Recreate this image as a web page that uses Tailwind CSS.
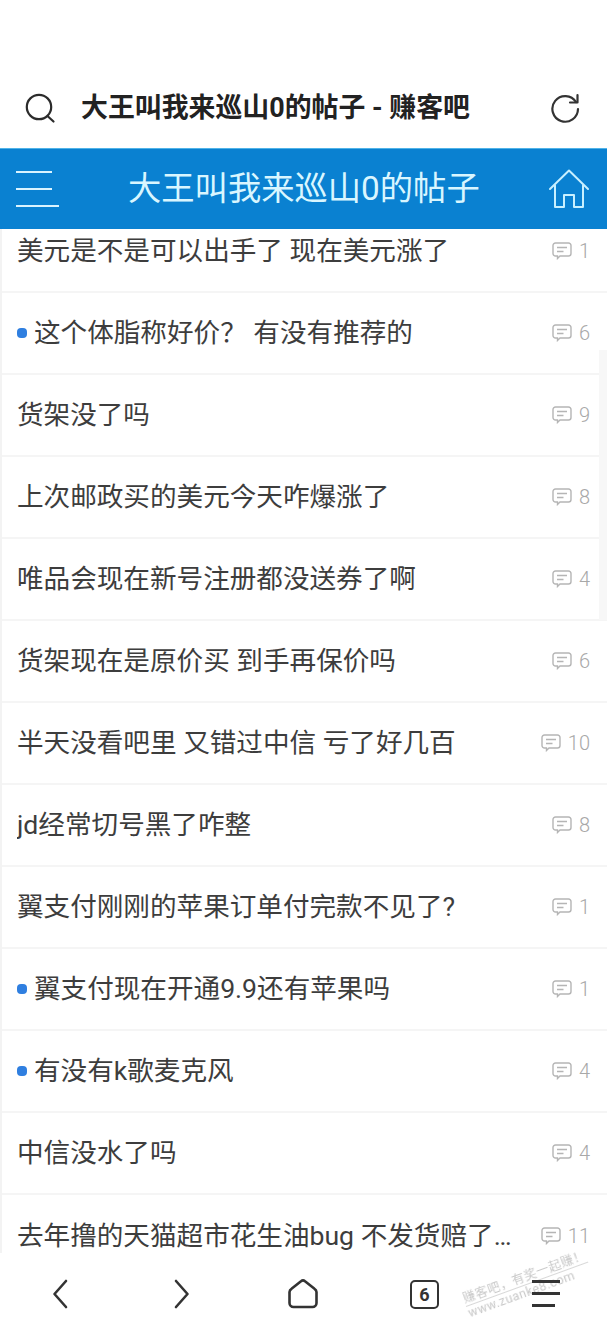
<!doctype html>
<html lang="zh-CN">
<head>
<meta charset="utf-8">
<script src="https://cdn.jsdelivr.net/npm/@tailwindcss/browser@4"></script>
</head>
<body class="bg-white">
<div class="relative w-[607px] h-[1334px] overflow-hidden bg-white flex flex-col font-['Roboto','Noto_Sans_CJK_SC',sans-serif]">
  <div class="h-[148px] shrink-0 pt-[68px] flex items-start">
    <div class="h-[80px] w-full flex items-center">
      <svg class="ml-[24px] w-[32px] h-[32px] shrink-0" viewBox="0 0 32 32" fill="none" stroke="#2b2b2b" stroke-width="2.2" stroke-linecap="round"><circle cx="15" cy="15" r="12.2"/><path d="M24 24.500l5.500 5"/></svg>
      <div class="ml-[25px] text-[26.9px] leading-[36px] font-bold text-[#222] whitespace-nowrap">大王叫我来巡山0的帖子 - 赚客吧</div>
      <svg class="ml-auto mr-[26px] w-[32px] h-[32px] shrink-0" viewBox="0 0 32 32" fill="none" stroke="#333" stroke-width="2.2" stroke-linecap="round" stroke-linejoin="round"><path d="M27 10A12.800 12.800 0 1 0 29 17"/><path d="M28.500 3v7.500H21"/></svg>
    </div>
  </div>
  <header class="h-[81px] shrink-0 bg-[#0a81d1] flex items-center relative z-10 border-t border-[#4fb3e8]">
    <div class="ml-[16px] w-[43px] h-[36px] flex flex-col justify-between">
      <div class="h-[2px] w-[36px] bg-[#d9f3ff]"></div>
      <div class="h-[2px] w-[36px] bg-[#d9f3ff]"></div>
      <div class="h-[2px] w-[43px] bg-[#d9f3ff]"></div>
    </div>
    <div class="ml-[69px] text-[33.3px] leading-[44px] text-[#d9f6ff] whitespace-nowrap">大王叫我来巡山0的帖子</div>
    <svg class="ml-auto mr-[18px] w-[40px] h-[40px] shrink-0" viewBox="0 0 40 40" fill="none" stroke="#c8f0ff" stroke-width="2" stroke-linejoin="round" stroke-linecap="round"><path d="M1 20 20 1.500 39 20"/><path d="M6 16.500V38h9V26h10v12h9V16.500"/></svg>
  </header>
  <main class="h-[1024px] shrink-0 overflow-hidden relative text-[26.6px] text-[#3d3d3d] border-l-2 border-[#f3f3f3]">
    <ul class="-mt-[18px] flex flex-col">
      <li class="h-[82px] border-b-2 border-[#f5f5f5] flex items-center pl-[15px] pr-[17px]"><span class="truncate flex-1 whitespace-nowrap">美元是不是可以出手了 现在美元涨了</span><svg class="w-[20px] h-[18px] shrink-0 ml-[8px]" viewBox="0 0 20 18" fill="none" stroke="#b5b5b5" stroke-width="1.4"><path d="M3.500 1h13a2.500 2.500 0 0 1 2.500 2.500v8a2.500 2.500 0 0 1-2.500 2.500H8l-2.500 2.500V14h-2A2.500 2.500 0 0 1 1 11.500v-8A2.500 2.500 0 0 1 3.500 1z"/><path d="M5 5.500h10M5 9.500h6.500"/></svg><span class="ml-[7px] text-[20px] font-light text-[#a8a8a8]">1</span></li>
      <li class="h-[82px] border-b-2 border-[#f5f5f5] flex items-center pl-[15px] pr-[17px]"><span class="w-[10px] h-[10px] rounded-[4px] bg-[#2f7fe0] shrink-0 mr-[7px]"></span><span class="truncate flex-1 whitespace-nowrap">这个体脂称好价？ 有没有推荐的</span><svg class="w-[20px] h-[18px] shrink-0 ml-[8px]" viewBox="0 0 20 18" fill="none" stroke="#b5b5b5" stroke-width="1.4"><path d="M3.500 1h13a2.500 2.500 0 0 1 2.500 2.500v8a2.500 2.500 0 0 1-2.500 2.500H8l-2.500 2.500V14h-2A2.500 2.500 0 0 1 1 11.500v-8A2.500 2.500 0 0 1 3.500 1z"/><path d="M5 5.500h10M5 9.500h6.500"/></svg><span class="ml-[7px] text-[20px] font-light text-[#a8a8a8]">6</span></li>
      <li class="h-[82px] border-b-2 border-[#f5f5f5] flex items-center pl-[15px] pr-[17px]"><span class="truncate flex-1 whitespace-nowrap">货架没了吗</span><svg class="w-[20px] h-[18px] shrink-0 ml-[8px]" viewBox="0 0 20 18" fill="none" stroke="#b5b5b5" stroke-width="1.4"><path d="M3.500 1h13a2.500 2.500 0 0 1 2.500 2.500v8a2.500 2.500 0 0 1-2.500 2.500H8l-2.500 2.500V14h-2A2.500 2.500 0 0 1 1 11.500v-8A2.500 2.500 0 0 1 3.500 1z"/><path d="M5 5.500h10M5 9.500h6.500"/></svg><span class="ml-[7px] text-[20px] font-light text-[#a8a8a8]">9</span></li>
      <li class="h-[82px] border-b-2 border-[#f5f5f5] flex items-center pl-[15px] pr-[17px]"><span class="truncate flex-1 whitespace-nowrap">上次邮政买的美元今天咋爆涨了</span><svg class="w-[20px] h-[18px] shrink-0 ml-[8px]" viewBox="0 0 20 18" fill="none" stroke="#b5b5b5" stroke-width="1.4"><path d="M3.500 1h13a2.500 2.500 0 0 1 2.500 2.500v8a2.500 2.500 0 0 1-2.500 2.500H8l-2.500 2.500V14h-2A2.500 2.500 0 0 1 1 11.500v-8A2.500 2.500 0 0 1 3.500 1z"/><path d="M5 5.500h10M5 9.500h6.500"/></svg><span class="ml-[7px] text-[20px] font-light text-[#a8a8a8]">8</span></li>
      <li class="h-[82px] border-b-2 border-[#f5f5f5] flex items-center pl-[15px] pr-[17px]"><span class="truncate flex-1 whitespace-nowrap">唯品会现在新号注册都没送券了啊</span><svg class="w-[20px] h-[18px] shrink-0 ml-[8px]" viewBox="0 0 20 18" fill="none" stroke="#b5b5b5" stroke-width="1.4"><path d="M3.500 1h13a2.500 2.500 0 0 1 2.500 2.500v8a2.500 2.500 0 0 1-2.500 2.500H8l-2.500 2.500V14h-2A2.500 2.500 0 0 1 1 11.500v-8A2.500 2.500 0 0 1 3.500 1z"/><path d="M5 5.500h10M5 9.500h6.500"/></svg><span class="ml-[7px] text-[20px] font-light text-[#a8a8a8]">4</span></li>
      <li class="h-[82px] border-b-2 border-[#f5f5f5] flex items-center pl-[15px] pr-[17px]"><span class="truncate flex-1 whitespace-nowrap">货架现在是原价买 到手再保价吗</span><svg class="w-[20px] h-[18px] shrink-0 ml-[8px]" viewBox="0 0 20 18" fill="none" stroke="#b5b5b5" stroke-width="1.4"><path d="M3.500 1h13a2.500 2.500 0 0 1 2.500 2.500v8a2.500 2.500 0 0 1-2.500 2.500H8l-2.500 2.500V14h-2A2.500 2.500 0 0 1 1 11.500v-8A2.500 2.500 0 0 1 3.500 1z"/><path d="M5 5.500h10M5 9.500h6.500"/></svg><span class="ml-[7px] text-[20px] font-light text-[#a8a8a8]">6</span></li>
      <li class="h-[82px] border-b-2 border-[#f5f5f5] flex items-center pl-[15px] pr-[17px]"><span class="truncate flex-1 whitespace-nowrap">半天没看吧里 又错过中信 亏了好几百</span><svg class="w-[20px] h-[18px] shrink-0 ml-[8px]" viewBox="0 0 20 18" fill="none" stroke="#b5b5b5" stroke-width="1.4"><path d="M3.500 1h13a2.500 2.500 0 0 1 2.500 2.500v8a2.500 2.500 0 0 1-2.500 2.500H8l-2.500 2.500V14h-2A2.500 2.500 0 0 1 1 11.500v-8A2.500 2.500 0 0 1 3.500 1z"/><path d="M5 5.500h10M5 9.500h6.500"/></svg><span class="ml-[7px] text-[20px] font-light text-[#a8a8a8]">10</span></li>
      <li class="h-[82px] border-b-2 border-[#f5f5f5] flex items-center pl-[15px] pr-[17px]"><span class="truncate flex-1 whitespace-nowrap">jd经常切号黑了咋整</span><svg class="w-[20px] h-[18px] shrink-0 ml-[8px]" viewBox="0 0 20 18" fill="none" stroke="#b5b5b5" stroke-width="1.4"><path d="M3.500 1h13a2.500 2.500 0 0 1 2.500 2.500v8a2.500 2.500 0 0 1-2.500 2.500H8l-2.500 2.500V14h-2A2.500 2.500 0 0 1 1 11.500v-8A2.500 2.500 0 0 1 3.500 1z"/><path d="M5 5.500h10M5 9.500h6.500"/></svg><span class="ml-[7px] text-[20px] font-light text-[#a8a8a8]">8</span></li>
      <li class="h-[82px] border-b-2 border-[#f5f5f5] flex items-center pl-[15px] pr-[17px]"><span class="truncate flex-1 whitespace-nowrap">翼支付刚刚的苹果订单付完款不见了?</span><svg class="w-[20px] h-[18px] shrink-0 ml-[8px]" viewBox="0 0 20 18" fill="none" stroke="#b5b5b5" stroke-width="1.4"><path d="M3.500 1h13a2.500 2.500 0 0 1 2.500 2.500v8a2.500 2.500 0 0 1-2.500 2.500H8l-2.500 2.500V14h-2A2.500 2.500 0 0 1 1 11.500v-8A2.500 2.500 0 0 1 3.500 1z"/><path d="M5 5.500h10M5 9.500h6.500"/></svg><span class="ml-[7px] text-[20px] font-light text-[#a8a8a8]">1</span></li>
      <li class="h-[82px] border-b-2 border-[#f5f5f5] flex items-center pl-[15px] pr-[17px]"><span class="w-[10px] h-[10px] rounded-[4px] bg-[#2f7fe0] shrink-0 mr-[7px]"></span><span class="truncate flex-1 whitespace-nowrap">翼支付现在开通9.9还有苹果吗</span><svg class="w-[20px] h-[18px] shrink-0 ml-[8px]" viewBox="0 0 20 18" fill="none" stroke="#b5b5b5" stroke-width="1.4"><path d="M3.500 1h13a2.500 2.500 0 0 1 2.500 2.500v8a2.500 2.500 0 0 1-2.500 2.500H8l-2.500 2.500V14h-2A2.500 2.500 0 0 1 1 11.500v-8A2.500 2.500 0 0 1 3.500 1z"/><path d="M5 5.500h10M5 9.500h6.500"/></svg><span class="ml-[7px] text-[20px] font-light text-[#a8a8a8]">1</span></li>
      <li class="h-[82px] border-b-2 border-[#f5f5f5] flex items-center pl-[15px] pr-[17px]"><span class="w-[10px] h-[10px] rounded-[4px] bg-[#2f7fe0] shrink-0 mr-[7px]"></span><span class="truncate flex-1 whitespace-nowrap">有没有k歌麦克风</span><svg class="w-[20px] h-[18px] shrink-0 ml-[8px]" viewBox="0 0 20 18" fill="none" stroke="#b5b5b5" stroke-width="1.4"><path d="M3.500 1h13a2.500 2.500 0 0 1 2.500 2.500v8a2.500 2.500 0 0 1-2.500 2.500H8l-2.500 2.500V14h-2A2.500 2.500 0 0 1 1 11.500v-8A2.500 2.500 0 0 1 3.500 1z"/><path d="M5 5.500h10M5 9.500h6.500"/></svg><span class="ml-[7px] text-[20px] font-light text-[#a8a8a8]">4</span></li>
      <li class="h-[82px] border-b-2 border-[#f5f5f5] flex items-center pl-[15px] pr-[17px]"><span class="truncate flex-1 whitespace-nowrap">中信没水了吗</span><svg class="w-[20px] h-[18px] shrink-0 ml-[8px]" viewBox="0 0 20 18" fill="none" stroke="#b5b5b5" stroke-width="1.4"><path d="M3.500 1h13a2.500 2.500 0 0 1 2.500 2.500v8a2.500 2.500 0 0 1-2.500 2.500H8l-2.500 2.500V14h-2A2.500 2.500 0 0 1 1 11.500v-8A2.500 2.500 0 0 1 3.500 1z"/><path d="M5 5.500h10M5 9.500h6.500"/></svg><span class="ml-[7px] text-[20px] font-light text-[#a8a8a8]">4</span></li>
      <li class="h-[82px] flex items-center pl-[15px] pr-[17px]"><span class="truncate flex-1 whitespace-nowrap">去年撸的天猫超市花生油bug 不发货赔了钱吗</span><svg class="w-[20px] h-[18px] shrink-0 ml-[8px]" viewBox="0 0 20 18" fill="none" stroke="#b5b5b5" stroke-width="1.4"><path d="M3.500 1h13a2.500 2.500 0 0 1 2.500 2.500v8a2.500 2.500 0 0 1-2.500 2.500H8l-2.500 2.500V14h-2A2.500 2.500 0 0 1 1 11.500v-8A2.500 2.500 0 0 1 3.500 1z"/><path d="M5 5.500h10M5 9.500h6.500"/></svg><span class="ml-[7px] text-[20px] font-light text-[#a8a8a8]">11</span></li>
    </ul>
    <div class="absolute right-0 top-[121px] w-[8px] h-[270px] bg-[#f7f7f7]"></div>
  </main>
  <nav class="relative flex-1 bg-white">
    <svg class="absolute left-[51px] top-[26px] w-[18px] h-[30px]" viewBox="0 0 18 30" fill="none" stroke="#333" stroke-width="2.600" stroke-linecap="round" stroke-linejoin="round"><path d="M15 2 3.500 15 15 28"/></svg>
    <svg class="absolute left-[173px] top-[26px] w-[18px] h-[30px]" viewBox="0 0 18 30" fill="none" stroke="#333" stroke-width="2.600" stroke-linecap="round" stroke-linejoin="round"><path d="M3 2l11.500 13L3 28"/></svg>
    <svg class="absolute left-[288px] top-[26px] w-[30px] h-[30px]" viewBox="0 0 30 30" fill="none" stroke="#333" stroke-width="2.600" stroke-linejoin="round"><path d="M13 2.300a3 3 0 0 1 4 0l9.500 7.500a4 4 0 0 1 2 3.200V24a4 4 0 0 1-4 4H5.500a4 4 0 0 1-4-4V13a4 4 0 0 1 2-3.200z"/></svg>
    <div class="absolute left-[410px] top-[27px] w-[29px] h-[29px] border-[2.5px] border-[#333] rounded-[5px] flex items-center justify-center text-[18px] leading-none font-bold text-[#333]">6</div>
    <div class="absolute left-[466px] top-[39px] -rotate-[20deg] origin-left text-[12.500px] leading-[14px] tracking-[0.5px] text-[#c8c8c8] whitespace-nowrap blur-[0.4px]"><div class="border-b border-[#d8d8d8]">赚客吧，有奖一起赚！</div><div>www.zuanke8.com</div></div>
    <div class="absolute left-[532px] top-[27px] w-[28px] h-[27px] flex flex-col justify-between">
      <div class="h-[3px] w-[28px] bg-[#333]"></div>
      <div class="h-[3px] w-[28px] bg-[#333]"></div>
      <div class="h-[3px] w-[23px] bg-[#333]"></div>
    </div>
  </nav>
</div>
</body>
</html>
